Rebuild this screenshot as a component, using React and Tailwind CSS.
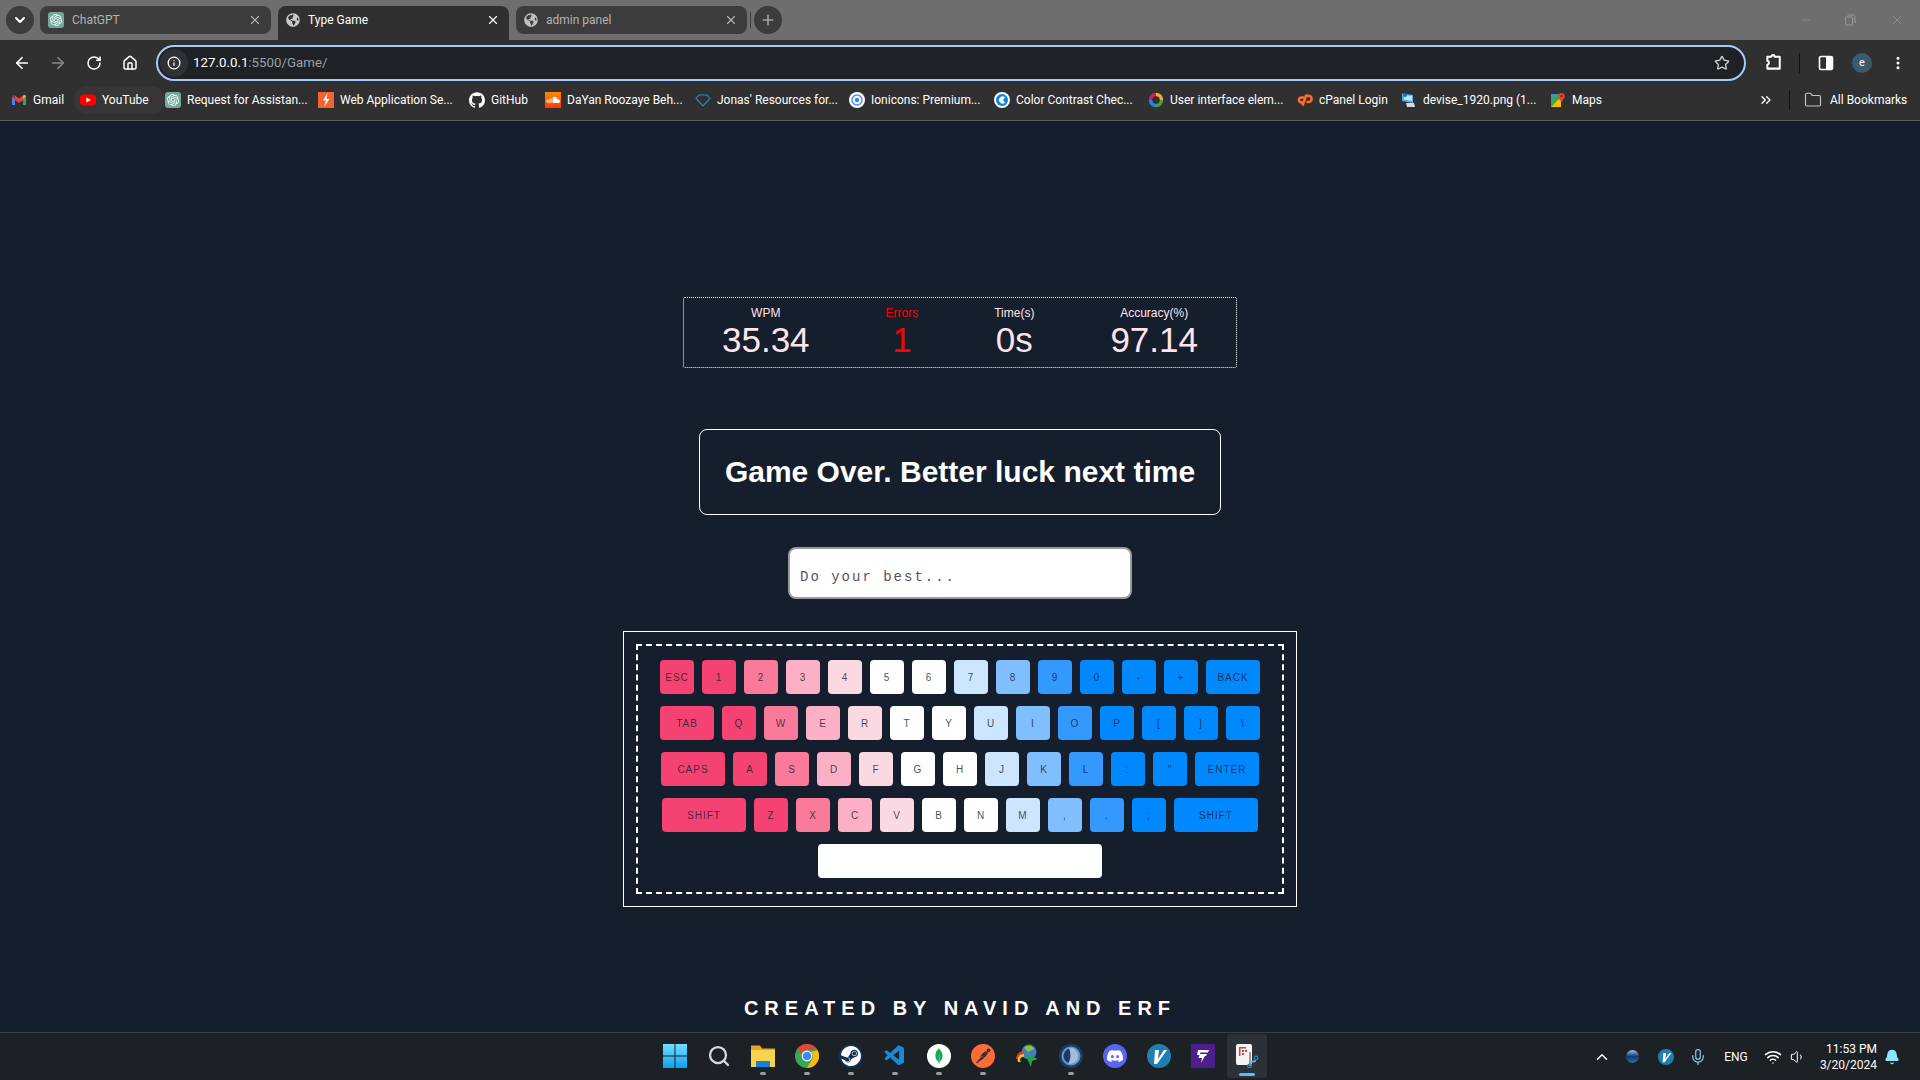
// Chrome window with the typing game page, plus the Windows taskbar under it.
import {
  ArrowLeft, ArrowRight, RotateCw, House, Info, Star, EllipsisVertical, X, Minus, Plus,
  ChevronDown, ChevronUp, ChevronsRight, Folder, Mic, Wifi, Volume1, Bell, Search,
} from "lucide-react";
import { FaGlobeAmericas } from "react-icons/fa";
import { VscVscode } from "react-icons/vsc";
import { SiOpenai, SiGithub, SiSoundcloud, SiSteam, SiDiscord, SiMongodb, SiPostman } from "react-icons/si";

const SANS = "font-['Liberation_Sans',Arial,sans-serif]";
const UI = "font-['Roboto',sans-serif]";

const GptIcon = () => (
  <span className="w-4 h-4 rounded-[3px] bg-[#74aa9c] flex items-center justify-center shrink-0">
    <SiOpenai className="w-3 h-3 text-white" />
  </span>
);

const Gmail = () => (
  <svg viewBox="0 0 16 16" className="w-4 h-4 shrink-0">
    <path d="M1 4.500v8.500h3V7z" fill="#4285f4" />
    <path d="M15 4.500v8.500h-3V7z" fill="#34a853" />
    <path d="M4 8V3.600L8 6.600l4-3V8L8 11z" fill="#ea4335" />
    <path d="M1 4.500C1 3 2.800 2.300 4 3.600V7z" fill="#c5221f" />
    <path d="M15 4.500C15 3 13.200 2.300 12 3.600V7z" fill="#fbbc04" />
  </svg>
);

const YouTube = () => (
  <svg viewBox="0 0 16 16" className="w-4 h-4 shrink-0">
    <rect x="0" y="2.500" width="16" height="11" rx="3" fill="#f00" />
    <path d="M6.400 5.500v5L10.800 8z" fill="#fff" />
  </svg>
);

const Bolt = () => (
  <svg viewBox="0 0 16 16" className="w-4 h-4 shrink-0">
    <rect width="16" height="16" fill="#f0652f" />
    <path d="M9.500 1 5 8.500h3L6 15l5.500-8H8.500z" fill="#fff" />
  </svg>
);

const Cloud = () => (
  <span className="w-4 h-4 bg-gradient-to-b from-[#ff8800] to-[#ff3300] flex items-center justify-center shrink-0">
    <SiSoundcloud className="w-[14px] h-[14px] text-white" />
  </span>
);

const Diamond = () => (
  <svg viewBox="0 0 16 16" className="w-4 h-4 shrink-0" fill="none" stroke="#2b8cc4" strokeWidth="1.100">
    <path d="M4 3h8l3 3.500L8 14 1 6.500z" />
  </svg>
);

const Ionicons = () => (
  <svg viewBox="0 0 16 16" className="w-4 h-4 shrink-0">
    <circle cx="8" cy="8" r="8" fill="#fff" />
    <circle cx="8" cy="8" r="5" fill="none" stroke="#4d8dff" strokeWidth="1.500" />
    <circle cx="8" cy="8" r="2.200" fill="#3880ff" />
  </svg>
);

const Contrast = () => (
  <svg viewBox="0 0 16 16" className="w-4 h-4 shrink-0">
    <circle cx="8" cy="8" r="8" fill="#fff" />
    <circle cx="8" cy="8" r="6" fill="#0a84e0" />
    <path d="M11 5.500A3.500 3.500 0 1 0 11 10.500L9 8z" fill="#fff" />
  </svg>
);

const UiRing = () => (
  <svg viewBox="0 0 16 16" className="w-4 h-4 shrink-0" fill="none" strokeWidth="3.500">
    <path d="M8 2.500A5.500 5.500 0 0 1 13.500 8" stroke="#f9a825" />
    <path d="M13.500 8A5.500 5.500 0 0 1 8 13.500" stroke="#43a047" />
    <path d="M8 13.500A5.500 5.500 0 0 1 2.500 8" stroke="#1e88e5" />
    <path d="M2.500 8A5.500 5.500 0 0 1 8 2.500" stroke="#d81b60" />
  </svg>
);

const CpanelLogo = () => (
  <svg viewBox="0 0 16 16" className="w-4 h-4 shrink-0" fill="none" stroke="#ff6c2c" strokeWidth="2.600">
    <path d="M7 5.500H4.500a2.500 2.500 0 0 0 0 5H6" />
    <path d="M5.500 13.500 9 3.800h2.500a3 3 0 0 1 0 6.200H9.500" />
  </svg>
);

const Monitor = () => (
  <svg viewBox="0 0 16 16" className="w-4 h-4 shrink-0">
    <path d="M1 1.500 12 3v8L1 9z" fill="#4fb0ee" />
    <path d="M3 3 11 4v5L3 7.500z" fill="#b5e4fb" />
    <path d="M5 11h8l1 4H6z" fill="#d8d8d8" />
    <circle cx="4" cy="3" r="2" fill="#1d6fb8" />
  </svg>
);

const Maps = () => (
  <svg viewBox="0 0 16 16" className="w-4 h-4 shrink-0">
    <path d="M1 2h10v13H1z" fill="#34a853" />
    <path d="M1 15 11 5v10z" fill="#fbbc04" />
    <path d="M1 2h5L1 7z" fill="#4285f4" />
    <path d="M11.500 1a3.200 3.200 0 0 1 3.200 3.200C14.700 6.500 11.500 10 11.500 10S8.300 6.500 8.300 4.200A3.200 3.200 0 0 1 11.500 1z" fill="#ea4335" />
    <circle cx="11.500" cy="4.200" r="1.100" fill="#8a1a12" />
  </svg>
);

const bookmarks = [
  { label: "Gmail", icon: <Gmail />, w: "w-[69px]" },
  { label: "YouTube", icon: <YouTube />, w: "w-[91px] -ml-[6px] pl-[6px] h-7 rounded-full bg-[#363636]" },
  { label: "Request for Assistan...", icon: <GptIcon />, w: "w-[153px]" },
  { label: "Web Application Se...", icon: <Bolt />, w: "w-[151px]" },
  { label: "GitHub", icon: <SiGithub className="w-4 h-4 shrink-0 text-white" />, w: "w-[76px]" },
  { label: "DaYan Roozaye Beh...", icon: <Cloud />, w: "w-[150px]" },
  { label: "Jonas' Resources for...", icon: <Diamond />, w: "w-[154px]" },
  { label: "Ionicons: Premium...", icon: <Ionicons />, w: "w-[145px]" },
  { label: "Color Contrast Chec...", icon: <Contrast />, w: "w-[154px]" },
  { label: "User interface elem...", icon: <UiRing />, w: "w-[149px]" },
  { label: "cPanel Login", icon: <CpanelLogo />, w: "w-[104px]" },
  { label: "devise_1920.png (1...", icon: <Monitor />, w: "w-[149px]" },
  { label: "Maps", icon: <Maps />, w: "w-[60px]" },
];

function Tab({ title, icon, active }) {
  return (
    <div
      className={
        active
          ? "w-[231px] h-[34px] mt-[6px] pb-[6px] rounded-t-lg bg-[#303030] flex items-center pl-[8px] pr-[9px] text-white"
          : "w-[231px] h-[28px] mt-[6px] rounded-lg bg-[#3c3c3c] flex items-center pl-[8px] pr-[9px] text-[#b4b4b4]"
      }
    >
      {icon}
      <span className={`ml-[8px] text-[12px] flex-1 ${UI}`}>{title}</span>
      <X className="w-[14px] h-[14px]" strokeWidth={2} />
    </div>
  );
}

function BrowserBar() {
  return (
    <header className="shrink-0">
      <div className="h-10 bg-[#6e6e6e] flex pl-[6px] relative">
        <div className="w-7 h-7 mt-[6px] rounded-full bg-[#3c3c3c] flex items-center justify-center text-white">
          <ChevronDown className="w-4 h-4" strokeWidth={3} />
        </div>
        <div className="flex gap-[7px] ml-[6px]">
          <Tab title="ChatGPT" icon={<GptIcon />} />
          <Tab title="Type Game" active icon={<FaGlobeAmericas className="w-[14px] h-[14px] text-[#c9c9c9]" />} />
          <Tab title="admin panel" icon={<FaGlobeAmericas className="w-[14px] h-[14px] text-[#c0c0c0]" />} />
        </div>
        <span className="w-px h-[16px] mt-[12px] ml-[3px] bg-[#3c3c3c]" />
        <div className="w-7 h-7 mt-[6px] ml-[3px] rounded-full bg-[#3c3c3c] flex items-center justify-center text-[#a0a0a0]">
          <Plus className="w-4 h-4" strokeWidth={2.5} />
        </div>
        <div className="ml-auto flex items-center h-10 text-[#9a9a9a]">
          <Minus className="w-4 h-4 mr-[30px]" strokeWidth={1} />
          <svg viewBox="0 0 12 12" className="w-3 h-3 mr-[33px]" fill="none" stroke="currentColor">
            <rect x="1.500" y="3" width="7" height="8" rx="1" />
            <path d="M3.500 1h6a1.500 1.500 0 0 1 1.500 1.500V9" />
          </svg>
          <X className="w-4 h-4 mr-[15px]" strokeWidth={1} />
        </div>
      </div>

      <div className="h-[46px] bg-[#303030] flex items-center pl-1">
        <button className="w-9 h-9 flex items-center justify-center text-white"><ArrowLeft className="w-[18px] h-[18px]" strokeWidth={2.25} /></button>
        <button className="w-9 h-9 flex items-center justify-center text-[#888]"><ArrowRight className="w-[18px] h-[18px]" strokeWidth={2.25} /></button>
        <button className="w-9 h-9 flex items-center justify-center text-white"><RotateCw className="w-4 h-4" strokeWidth={2.25} /></button>
        <button className="w-9 h-9 flex items-center justify-center text-white"><House className="w-4 h-4" strokeWidth={2.25} /></button>
        <div className="w-[1590px] ml-[8px] h-9 rounded-full border-2 border-[#a8c7fa] bg-[#202124] flex items-center pl-[2px] pr-[14px]">
          <span className="w-7 h-7 rounded-full bg-[#303134] flex items-center justify-center text-white">
            <Info className="w-[14px] h-[14px]" strokeWidth={2.25} />
          </span>
          <span className={`ml-[5px] text-[13.3px] flex-1 text-white ${UI}`}>
            127.0.0.1<span className="text-[#9aa0a6]">:5500/Game/</span>
          </span>
          <Star className="w-4 h-4 text-[#d0d0d0]" strokeWidth={2} />
        </div>
        <svg viewBox="0 0 16 16" className="w-[18px] h-[18px] ml-[18px] text-white" fill="none" stroke="currentColor" strokeWidth="1.800">
          <path d="M3 2.500h3.500a1.500 1.500 0 0 1 3 0H14v10.500H3v-3.500a1.800 1.800 0 0 0 0-3.500z" strokeLinejoin="round" />
        </svg>
        <span className="w-px h-5 bg-[#111] ml-[17px]" />
        <svg viewBox="0 0 16 16" className="w-4 h-4 ml-[18px]">
          <rect x="1.500" y="1.500" width="13" height="13" rx="1.500" fill="none" stroke="#fff" strokeWidth="1.600" />
          <rect x="8" y="2" width="6" height="12" fill="#fff" />
        </svg>
        <span className={`w-5 h-5 ml-[18px] rounded-full bg-[#3c5a6e] text-white text-[11px] flex items-center justify-center ${UI}`}>e</span>
        <EllipsisVertical className="w-4 h-4 ml-[18px] text-white" strokeWidth={2.5} />
      </div>

      <div className="h-[35px] bg-[#303030] border-b border-[#5c5c5c] flex items-center pl-[11px] pb-[6px]">
        {bookmarks.map((b) => (
          <div key={b.label} className={`${b.w} shrink-0 flex items-center gap-[6px] text-[12px] text-white whitespace-nowrap ${UI}`}>
            {b.icon}
            <span>{b.label}</span>
          </div>
        ))}
        <ChevronsRight className="w-4 h-4 ml-[148px] text-white" strokeWidth={2} />
        <span className="w-px h-5 bg-[#111] ml-[15px]" />
        <Folder className="w-[18px] h-[18px] ml-[14px] text-[#c4c4c4]" strokeWidth={1.5} />
        <span className={`ml-[8px] text-[12px] text-white whitespace-nowrap ${UI}`}>All Bookmarks</span>
      </div>
    </header>
  );
}

function Stat({ label, value, red }) {
  return (
    <div className={red ? "flex flex-col items-center text-[#f00]" : "flex flex-col items-center text-[#ffe4ec]"}>
      <span className="text-[12px] leading-[14px]">{label}</span>
      <span className="text-[35px] leading-[40px]">{value}</span>
    </div>
  );
}

const RED = "bg-[#f44372]";
const PINK = "bg-[#fa7a9c]";
const ROSE = "bg-[#fbb0c5]";
const BLUSH = "bg-[#fbd9e3]";
const WHITE = "bg-white";
const SKY = "bg-[#cce6ff]";
const AZURE = "bg-[#80bfff]";
const BLUE = "bg-[#3399ff]";
const DEEP = "bg-[#0088ff]";

const keyRows = [
  [["ESC", RED], ["1", RED], ["2", PINK], ["3", ROSE], ["4", BLUSH], ["5", WHITE], ["6", WHITE], ["7", SKY], ["8", AZURE], ["9", BLUE], ["0", DEEP], ["-", DEEP], ["+", DEEP], ["BACK", DEEP, "w-[54px]"]],
  [["TAB", RED, "w-[54px]"], ["Q", RED], ["W", PINK], ["E", ROSE], ["R", BLUSH], ["T", WHITE], ["Y", WHITE], ["U", SKY], ["I", AZURE], ["O", BLUE], ["P", DEEP], ["[", DEEP], ["]", DEEP], ["\\", DEEP]],
  [["CAPS", RED, "w-[64px]"], ["A", RED], ["S", PINK], ["D", ROSE], ["F", BLUSH], ["G", WHITE], ["H", WHITE], ["J", SKY], ["K", AZURE], ["L", BLUE], [":", DEEP], ['"', DEEP], ["ENTER", DEEP, "w-[64px]"]],
  [["SHIFT", RED, "w-[84px]"], ["Z", RED], ["X", PINK], ["C", ROSE], ["V", BLUSH], ["B", WHITE], ["N", WHITE], ["M", SKY], [",", AZURE], [".", BLUE], [";", DEEP], ["SHIFT", DEEP, "w-[84px]"]],
];

function Keyboard() {
  return (
    <div className="w-[674px] mt-[32px] border border-white p-3">
      <div className="border-2 border-dashed border-white p-[14px] flex flex-col items-center gap-3">
        {keyRows.map((row, i) => (
          <div key={i} className="flex gap-2">
            {row.map(([label, color, width], j) => (
              <div
                key={j}
                className={`${width || "w-[34px]"} ${color} h-[34px] rounded-[4px] flex items-center justify-center text-[10px] tracking-[1px] text-[#141e2d]/80`}
              >
                {label}
              </div>
            ))}
          </div>
        ))}
        <div className="w-[284px] h-[34px] rounded-[4px] bg-white" />
      </div>
    </div>
  );
}

function GamePage() {
  return (
    <main className={`flex-1 min-h-0 overflow-hidden bg-[#141e2d] flex flex-col items-center pt-[176px] ${SANS}`}>
      <div className="w-[554px] h-[71px] border border-dotted border-white rounded-[2px] flex justify-around items-center">
        <Stat label="WPM" value="35.34" />
        <Stat label="Errors" value="1" red />
        <Stat label="Time(s)" value="0s" />
        <Stat label="Accuracy(%)" value="97.14" />
      </div>
      <div className="w-[522px] h-[86px] mt-[61px] pb-[2px] border border-white rounded-lg flex items-center justify-center text-white text-[30px] font-bold">
        Game Over. Better luck next time
      </div>
      <input
        readOnly
        placeholder="Do your best..."
        className="w-[344px] h-[52px] mt-[32px] bg-white border-2 border-[#9a9a9a] rounded-lg pl-[10px] pt-[8px] text-[14px] tracking-[2px] font-['Liberation_Mono',monospace] placeholder:text-[#555] outline-none"
      />
      <Keyboard />
      <div className="mt-[87px] text-[20px] leading-7 font-bold tracking-[6px] text-white">CREATED BY NAVID AND ERF</div>
    </main>
  );
}

const WinLogo = () => (
  <svg viewBox="0 0 24 24" className="w-6 h-6">
    <defs>
      <linearGradient id="win" x1="0" y1="0" x2="0" y2="1">
        <stop offset="0" stopColor="#6fe0ff" />
        <stop offset="1" stopColor="#0fa0ee" />
      </linearGradient>
    </defs>
    <path d="M0 0h11.500v11.500H0zM12.500 0H24v11.500H12.500zM0 12.500h11.500V24H0zM12.500 12.500H24V24H12.500z" fill="url(#win)" />
  </svg>
);

const FolderApp = () => (
  <svg viewBox="0 0 24 24" className="w-6 h-6">
    <path d="M0 1.500h9l2 3h13V22H0z" fill="#e3a81f" />
    <path d="M0 6h24v17H0z" fill="#fbd44f" />
    <path d="M5 17h14v6H5z" fill="#1383d6" />
  </svg>
);

const ChromeApp = () => (
  <svg viewBox="0 0 24 24" className="w-6 h-6">
    <circle cx="12" cy="12" r="12" fill="#34a853" />
    <path d="M12 0a12 12 0 0 1 10.400 6H12a6 6 0 0 0-5.800 4.500L2.600 4.500A12 12 0 0 1 12 0z" fill="#ea4335" />
    <path d="M22.400 6A12 12 0 0 1 12 24l5.200-9A6 6 0 0 0 16 8z" fill="#fbbc04" />
    <circle cx="12" cy="12" r="5.400" fill="#fff" />
    <circle cx="12" cy="12" r="4.300" fill="#4285f4" />
  </svg>
);

const Round = ({ bg, children }) => (
  <span className={`w-6 h-6 rounded-full flex items-center justify-center ${bg}`}>{children}</span>
);

const IdmApp = () => (
  <svg viewBox="0 0 24 24" className="w-6 h-6">
    <circle cx="14" cy="8" r="7.500" fill="#3f7fbf" />
    <path d="M9 4c3-3 8-3 10 1l-6 3z" fill="#86c440" />
    <path d="M1 15a8 8 0 0 1 8-8v3a5 5 0 0 0-5 5z" fill="#e83a2e" />
    <path d="M3 18a6 6 0 0 1 6-8v3a3 3 0 0 0-3 5z" fill="#f4c51e" />
    <path d="M10 10 23 15l-6 2-1 6z" fill="#27a53a" />
  </svg>
);

const RingApp = () => (
  <svg viewBox="0 0 24 24" className="w-6 h-6">
    <circle cx="12" cy="12" r="12" fill="#25375f" />
    <circle cx="12" cy="12" r="8.500" fill="none" stroke="#45a3d6" strokeWidth="2" />
    <path d="M10 4a8 8 0 1 1-1 15.500C12 16 12 9 10 4z" fill="#a9b9d8" />
  </svg>
);

const VMark = ({ size }) => (
  <svg viewBox="0 0 24 24" className={size}>
    <circle cx="12" cy="12" r="12" fill="#1f7fae" />
    <path d="M8 6h4l-1 9 6-9h3L10 20H7z" fill="#fff" />
  </svg>
);

const PurpleApp = () => (
  <svg viewBox="0 0 24 24" className="w-6 h-6">
    <rect width="24" height="24" fill="#4c1f8c" />
    <path d="M7 6h11l-1 2.500H9.500L8.800 10H16l-1 2h-4l3 0-4 7 1-5H7.500L8.500 11H6z" fill="#fff" />
  </svg>
);

const SnipApp = () => (
  <svg viewBox="0 0 24 24" className="w-6 h-6">
    <rect x="1" y="0" width="16" height="21" rx="2" fill="#f4f4f4" />
    <path d="M4 3h7v1.500H5.500V12H4z" fill="#d9402e" />
    <path d="M7 6h2v2H7zM10 6h2v2h-2zM7 9h2v2H7z" fill="#d9402e" />
    <path d="M14 8h2v9l5-1v2l-5 1v3h-2z" fill="#9a9a9a" />
    <circle cx="21" cy="14" r="1.800" fill="none" stroke="#1789d6" strokeWidth="1.200" />
    <circle cx="14.500" cy="22" r="1.800" fill="none" stroke="#1789d6" strokeWidth="1.200" />
  </svg>
);

const taskbarApps = [
  { key: "start", icon: <WinLogo /> },
  { key: "search", icon: <Search className="w-6 h-6 text-[#d8d8d8]" strokeWidth={2.25} /> },
  { key: "files", icon: <FolderApp />, dot: true },
  { key: "chrome", icon: <ChromeApp />, dot: true },
  { key: "steam", icon: <Round bg="bg-[#10305a]"><SiSteam className="w-5 h-5 text-white" /></Round>, dot: true },
  { key: "vscode", icon: <VscVscode className="w-6 h-6 text-[#1a8ad8]" />, dot: true },
  { key: "mongo", icon: <Round bg="bg-white"><SiMongodb className="w-4 h-4 text-[#13aa52]" /></Round>, dot: true },
  { key: "postman", icon: <SiPostman className="w-6 h-6 text-[#ff6c37]" />, dot: true },
  { key: "idm", icon: <IdmApp /> },
  { key: "ring", icon: <RingApp />, dot: true },
  { key: "discord", icon: <Round bg="bg-[#5865f2]"><SiDiscord className="w-4 h-4 text-white" /></Round> },
  { key: "vpn", icon: <VMark size="w-6 h-6" /> },
  { key: "purple", icon: <PurpleApp /> },
  { key: "snip", icon: <SnipApp />, active: true },
];

function Taskbar() {
  return (
    <footer className={`h-12 shrink-0 bg-[#1c2126] border-t border-[#3b3f45] grid grid-cols-[1fr_auto_1fr] ${UI}`}>
      <div />
      <div className="flex ml-[2px]">
        {taskbarApps.map((a) => (
          <div
            key={a.key}
            className={
              a.active
                ? "w-[40px] h-[44px] mx-[2px] mt-[1px] rounded bg-[#2c3137] flex items-center justify-center relative"
                : "w-[44px] h-[46px] flex items-center justify-center relative"
            }
          >
            {a.icon}
            {a.dot && <span className="absolute bottom-[4px] left-1/2 -translate-x-1/2 w-[6px] h-[3px] rounded-full bg-[#9a9a9a]" />}
            {a.active && <span className="absolute bottom-[2px] left-1/2 -translate-x-1/2 w-[16px] h-[3px] rounded-full bg-[#4cc2ff]" />}
          </div>
        ))}
      </div>
      <div className="flex items-center justify-end pr-[13px] text-white">
        <span className="w-8 flex justify-center"><ChevronUp className="w-[18px] h-[18px]" strokeWidth={2} /></span>
        <span className="w-8 flex justify-center -ml-[2px] mr-[2px]">
          <span className="w-[13px] h-[13px] rounded-full bg-gradient-to-b from-[#9cc6ea] via-[#14396e] to-[#2d6db5]" />
        </span>
        <span className="w-8 flex justify-center"><VMark size="w-4 h-4" /></span>
        <span className="w-8 flex justify-center"><Mic className="w-[18px] h-[18px] text-[#8fdcf5]" strokeWidth={1.5} /></span>
        <span className="w-11 text-center text-[12px]">ENG</span>
        <span className="w-[22px] ml-[4px] flex justify-center"><Wifi className="w-[18px] h-[18px]" strokeWidth={2} /></span>
        <span className="w-[22px] ml-[3px] -mr-[2px] flex justify-center"><Volume1 className="w-4 h-4" strokeWidth={1.5} /></span>
        <div className="w-[70px] text-right text-[12px] leading-4">
          <div>11:53 PM</div>
          <div>3/20/2024</div>
        </div>
        <span className="w-[30px] flex justify-center"><Bell className="w-4 h-4 text-[#8fe3fa] fill-[#8fe3fa]" /></span>
      </div>
    </footer>
  );
}

export default function App() {
  return (
    <div className="w-[1920px] h-[1080px] flex flex-col overflow-hidden">
      <BrowserBar />
      <GamePage />
      <Taskbar />
    </div>
  );
}
